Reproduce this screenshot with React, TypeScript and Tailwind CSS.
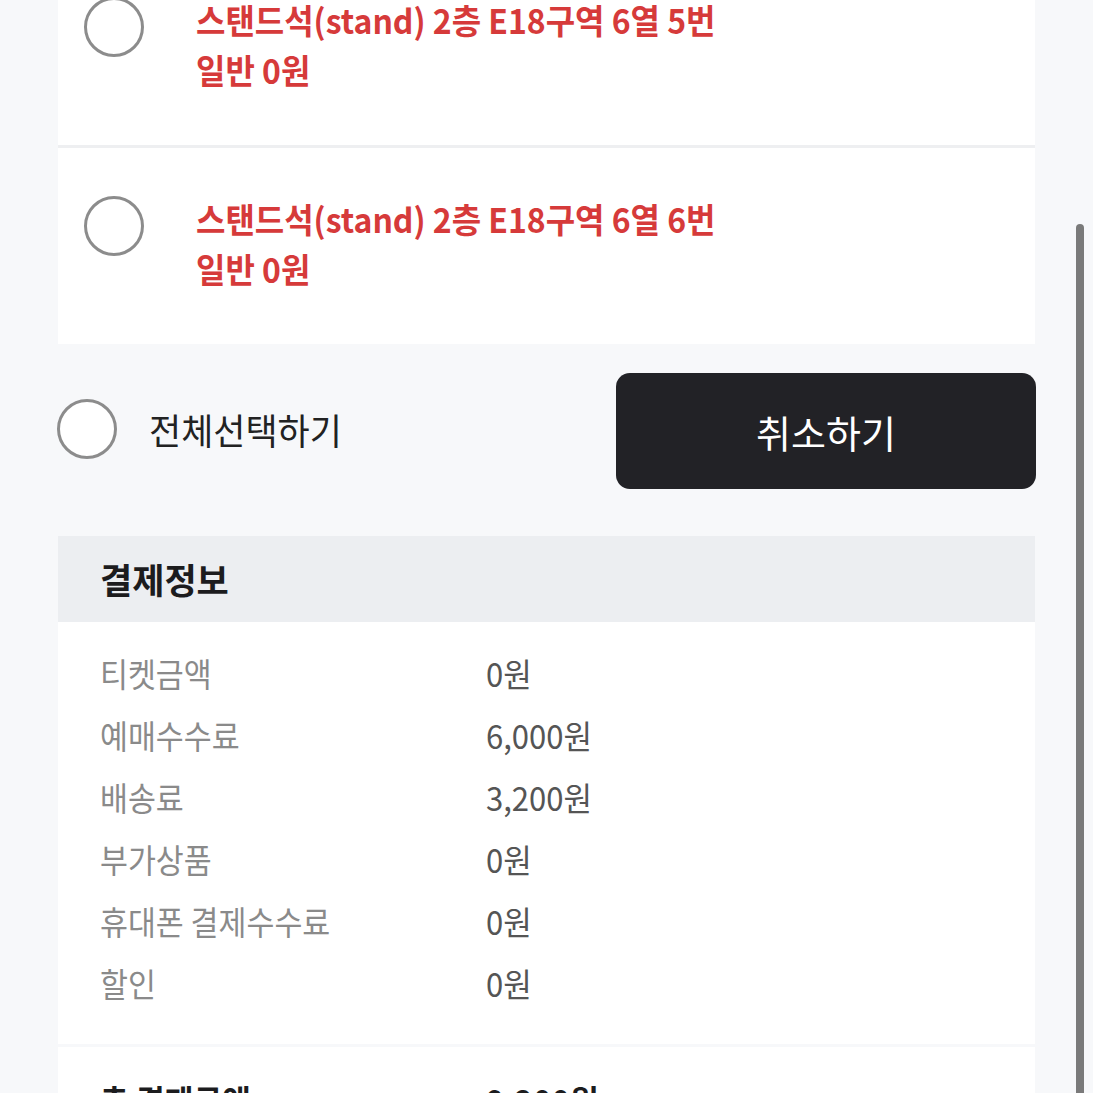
import React from 'react';

const font = { fontFamily: '"Noto Sans CJK KR", "Noto Sans", sans-serif' };

const seats = [
  { label: '스탠드석(stand) 2층 E18구역 6열 5번', price: '일반 0원' },
  { label: '스탠드석(stand) 2층 E18구역 6열 6번', price: '일반 0원' },
];

const rows = [
  { label: '티켓금액', value: '0원' },
  { label: '예매수수료', value: '6,000원' },
  { label: '배송료', value: '3,200원' },
  { label: '부가상품', value: '0원' },
  { label: '휴대폰 결제수수료', value: '0원' },
  { label: '할인', value: '0원' },
];

const Circle = () => (
  <span className="block h-[60px] w-[60px] shrink-0 rounded-full border-[3px] border-[#8c8c8c] bg-white" />
);

export default function App() {
  return (
    <div className="relative h-[1093px] w-full overflow-hidden bg-[#f7f8fa]" style={font}>
      <div className="-mt-[51px] px-[58px]">
        <div className="flex flex-col gap-[3px] bg-[#eeeff1]">
          {seats.map((s, i) => (
            <div key={i} className="flex h-[196px] items-start gap-[52px] bg-white pl-[26px] pt-[48px]">
              <Circle />
              <div className="-mt-[2px] flex flex-col text-[#d63a3a] font-bold leading-[50px]">
                <span className="inline-block origin-left scale-x-[0.94] whitespace-nowrap text-[34px]">{s.label}</span>
                <span className="inline-block origin-left scale-x-[0.94] whitespace-nowrap text-[34px]">{s.price}</span>
              </div>
            </div>
          ))}
        </div>

        <div className="mt-[29px] flex items-center justify-between">
          <div className="-ml-[1px] -mt-[4px] flex items-center gap-[32px]">
            <Circle />
            <span className="inline-block origin-left scale-x-[0.97] text-[36px] text-[#222]">전체선택하기</span>
          </div>
          <button className="-mr-[1px] flex h-[116px] w-[420px] items-center justify-center rounded-[14px] bg-[#222226] text-[38px] text-white">
            <span className="inline-block">취소하기</span>
          </button>
        </div>

        <div className="mt-[47px]">
          <div className="flex h-[86px] items-center bg-[#eceef1] pl-[42px]">
            <span className="inline-block text-[35px] font-bold text-[#1c1c1e]">결제정보</span>
          </div>
          <div className="bg-white pb-[29px] pt-[21px]">
            {rows.map((r) => (
              <div key={r.label} className="flex h-[62px] items-center pl-[42px] text-[33px]">
                <span className="inline-block w-[386px] origin-left scale-x-[0.92] whitespace-nowrap text-[#8a8a8a]">{r.label}</span>
                <span className="inline-block origin-left scale-x-[0.94] whitespace-nowrap text-[#555]">{r.value}</span>
              </div>
            ))}
          </div>
          <div className="mt-[3px] flex h-[120px] items-start bg-white pl-[42px] pt-[28px] text-[34px] font-bold text-[#1c1c1e]">
            <span className="inline-block w-[386px] origin-left scale-x-[0.92] whitespace-nowrap">총 결제금액</span>
            <span className="inline-block origin-left scale-x-[0.92] whitespace-nowrap">9,200원</span>
          </div>
        </div>
      </div>

      <div className="absolute right-[9px] top-[224px] h-[900px] w-[8px] rounded-full bg-[#7a7a7a]" />
    </div>
  );
}
